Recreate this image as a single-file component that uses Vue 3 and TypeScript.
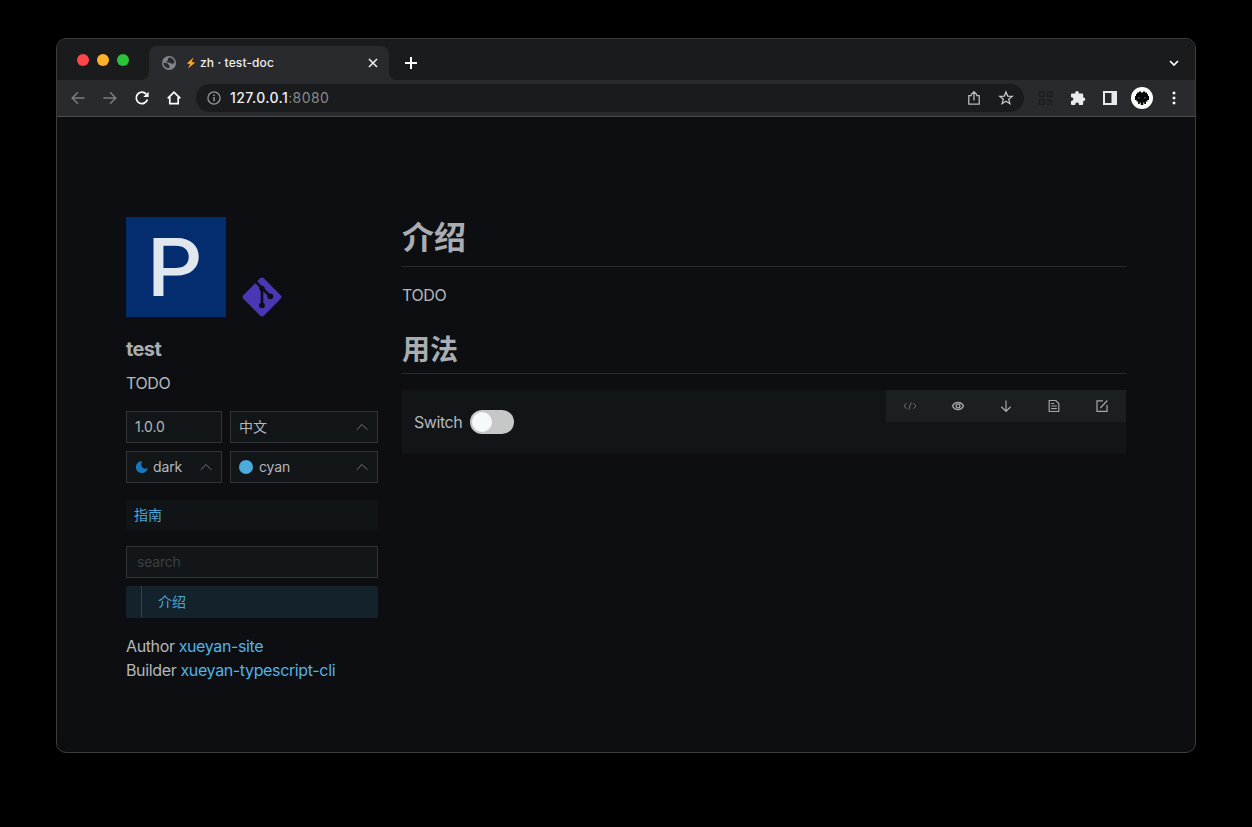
<script setup lang="ts">
import { ref } from 'vue'

interface NavLink {
  label: string
  name: string
  cls: string
}

const enabled = ref(false)
const query = ref('')
const lights: string[] = ['red', 'amber', 'green']
const credits: NavLink[] = [
  { label: 'Author', name: 'xueyan-site', cls: 'author' },
  { label: 'Builder', name: 'xueyan-typescript-cli', cls: 'builder' },
]
</script>

<template>
  <div class="desktop">
    <div class="window">
      <header class="tabs">
        <div class="lights"><i v-for="c in lights" :key="c" :class="c"></i></div>
        <div class="tab">
          <svg class="globe" width="14" height="14" viewBox="0 0 14 14">
            <circle cx="7" cy="7" r="7" fill="#81858b" />
            <path d="M7.300 1.400c-1.300.7-1.800 1.500-1.300 2.300.4.800-.5 1.400-1.900 1.500.2 1 1.200 1.300 2.600 1.300 1.500.1 1.900.9 2.900 1.200 1.200.3 2.100-.1 3-.9C12.400 3.800 10.200 1.400 7.300 1.400zM1.500 6.600c1.600.3 3 .4 4.100.9.900.5.500 1.300 1.500 1.700.8.300.6 1.700 0 3C3.800 12.400 1.400 9.800 1.500 6.600z" fill="#292a2e" />
          </svg>
          <svg class="bolt" width="10" height="12" viewBox="0 0 10 12"><path d="M7.500.5.800 6.500l3.300.4L2 11.500l7.200-6-3.500-.4z" fill="#f9a72b" /></svg>
          <span class="tab-title">zh · test-doc</span>
          <svg class="close" width="10" height="10" viewBox="0 0 10 10"><path d="M1 1l8 8M9 1L1 9" stroke="#e8eaed" stroke-width="1.700" /></svg>
        </div>
        <svg class="plus" width="12" height="12" viewBox="0 0 12 12"><path d="M6 0v12M0 6h12" stroke="#fff" stroke-width="2" /></svg>
        <svg class="chev" width="10" height="7" viewBox="0 0 10 7"><path d="M1 1l4 4 4-4" fill="none" stroke="#fff" stroke-width="1.700" /></svg>
      </header>

      <div class="toolbar">
        <svg width="16" height="16" viewBox="0 0 16 16"><path d="M14.500 8H2.500M8 2.200L2.200 8 8 13.800" fill="none" stroke="#7b7d81" stroke-width="1.500" /></svg>
        <svg width="16" height="16" viewBox="0 0 16 16"><path d="M1.500 8h12M8 2.200L13.800 8 8 13.800" fill="none" stroke="#7b7d81" stroke-width="1.500" /></svg>
        <svg width="16" height="16" viewBox="0 0 16 16"><path d="M13.400 9.500A5.700 5.700 0 1 1 12.200 4.100" fill="none" stroke="#fff" stroke-width="1.700" /><path d="M14.600 1.700v5.300H9.300z" fill="#fff" /></svg>
        <svg width="16" height="16" viewBox="0 0 16 16"><path d="M1.700 8.300L8 2.200l6.300 6.100M3.800 7v6.700h8.400V7" fill="none" stroke="#fff" stroke-width="1.700" /></svg>
        <div class="omnibox">
          <svg width="14" height="14" viewBox="0 0 14 14"><circle cx="7" cy="7" r="6.100" fill="none" stroke="#94969a" stroke-width="1.300" /><path d="M7 6v4.300M7 3.500v1.500" stroke="#94969a" stroke-width="1.500" /></svg>
          <span class="url"><b>127.0.0.1</b>:8080</span>
          <svg class="share" width="16" height="16" viewBox="0 0 16 16"><path d="M5.800 5.700H2.800v8.500h10.400V5.700h-3M8 10.500V1.800M5 4.700l3-3 3 3" fill="none" stroke="#b9bbbf" stroke-width="1.300" /></svg>
          <svg width="16" height="16" viewBox="0 0 16 16"><path d="M8 1.900l1.700 4.200 4.500.3-3.500 2.900 1.200 4.400L8 11.300l-3.900 2.400 1.200-4.400-3.500-2.900 4.500-.3z" fill="none" stroke="#c6c8cb" stroke-width="1.300" /></svg>
        </div>
        <svg width="16" height="16" viewBox="0 0 16 16" fill="none" stroke="#1c1d20" stroke-width="1.100"><path d="M1.600 1.600h4.800v4.800H1.600zM9.600 1.600h4.800v4.800H9.600zM1.600 9.600h4.800v4.800H1.600zM9 9.600h2v2H9M12.500 9v3h2.500M9 14.400h3M13 14.400h2M3.500 4h1M11.500 4h1M3.500 12h1" /></svg>
        <svg width="16" height="16" viewBox="0 0 16 16"><path d="M2 3.500h3.200v-.7a1.800 1.800 0 0 1 3.600 0v.7h3.400a1 1 0 0 1 1 1v3h.4a1.700 1.700 0 0 1 0 3.400h-.4v3.200a1 1 0 0 1-1 1H9v-.6a1.900 1.900 0 0 0-3.800 0v.6H2a1 1 0 0 1-1-1v-3.200h.6a1.800 1.800 0 0 0 0-3.600H1V4.500a1 1 0 0 1 1-1z" fill="#e9eaed" /></svg>
        <svg width="16" height="16" viewBox="0 0 16 16"><path d="M1 1h14v14H1zm2 2v10h6.500V3z" fill="#e9eaed" fill-rule="evenodd" /></svg>
        <svg class="avatar" width="22" height="22" viewBox="0 0 22 22"><circle cx="11" cy="11" r="11" fill="#fff" /><path d="M8 4.500h2v1h2v-1h2v1h2V7h1v2h1v4h-1.500v1.500H15V17h-1.700v-1.500h-1V18H9.700v-2.500h-1V17H7v-2.500H5.500V13H4V9h1V7h1V5.500h2z" fill="#050608" /><path d="M7.200 10h1.500v1.500H7.200zM13.300 10h1.500v1.500h-1.500z" fill="#555" /></svg>
        <svg width="16" height="16" viewBox="0 0 16 16" fill="#fff"><path d="M6.700 1.800h2.600v2.500H6.700zM6.700 6.800h2.600v2.500H6.700zM6.700 11.700h2.600v2.500H6.700z" /></svg>
      </div>

      <div class="page">
        <aside>
          <div class="brand">
            <div class="logo"><span>P</span></div>
            <svg width="40" height="40" viewBox="0 0 40 40">
              <rect x="5.500" y="5.500" width="29" height="29" rx="2.900" transform="rotate(45 20 20)" fill="#4937b5" />
              <g stroke="#0d0e12" stroke-width="2.600" fill="none"><path d="M13 4L20 11l8.500 8.500M20 11v17" /></g>
              <g fill="#0d0e12"><circle cx="20" cy="11.500" r="2.700" /><circle cx="28.300" cy="19.300" r="2.900" /><circle cx="20" cy="28.300" r="2.900" /></g>
            </svg>
          </div>
          <h3>test</h3>
          <p class="desc">TODO</p>
          <div class="options">
            <div class="field"><span class="version">1.0.0</span></div>
            <div class="field"><span>中文</span><svg class="up" width="12" height="8" viewBox="0 0 12 8"><path d="M.7 6.800L6 1.500l5.300 5.300" /></svg></div>
            <div class="field">
              <svg class="moon" width="12" height="12" viewBox="0 0 12 12"><path d="M5.300.3a5.900 5.900 0 1 0 6.400 6.200c-1.200 1.400-3.200 1.600-4.500.6C5 5.500 4.600 2.700 6.300.6z" fill="#1677bc" /></svg>
              <span class="dark">dark</span><svg class="up" width="12" height="8" viewBox="0 0 12 8"><path d="M.7 6.800L6 1.500l5.300 5.300" /></svg>
            </div>
            <div class="field">
              <i class="swatch"></i><span class="cyan">cyan</span><svg class="up" width="12" height="8" viewBox="0 0 12 8"><path d="M.7 6.800L6 1.500l5.300 5.300" /></svg>
            </div>
          </div>
          <a class="guide">指南</a>
          <input v-model="query" class="search" placeholder="search" />
          <nav class="current"><a>介绍</a></nav>
          <div v-for="c in credits" :key="c.name" class="credit" :class="c.cls"><span>{{ c.label }}</span> <a>{{ c.name }}</a></div>
        </aside>

        <main>
          <h1>介绍</h1>
          <p class="intro">TODO</p>
          <h2>用法</h2>
          <section class="demo">
            <div class="sample">
              <span>Switch</span>
              <button class="switch" :class="{ on: enabled }" aria-label="Switch" @click="enabled = !enabled"><i></i></button>
            </div>
            <div class="actions">
              <svg class="dim" width="14" height="14" viewBox="0 0 14 14"><path d="M3.600 4L1.200 7l2.400 3M10.400 4l2.400 3-2.400 3M8.200 3.300L5.800 10.700" /></svg>
              <svg class="eye" width="14" height="14" viewBox="0 0 14 14"><path d="M1.500 7C3.800 2.300 10.200 2.300 12.500 7 10.200 11.700 3.800 11.700 1.500 7z" /><circle cx="7" cy="7" r="1.900" /></svg>
              <svg width="14" height="14" viewBox="0 0 14 14"><path d="M7 1.500v10.700M2.300 7.700L7 12.300l4.700-4.600" /></svg>
              <svg width="14" height="14" viewBox="0 0 14 14"><path d="M2.200 1.500h6.600l3 3v8H2.200zM4.200 4.500h3M4.200 7h5.600M4.200 9.700h5.600" /></svg>
              <svg width="14" height="14" viewBox="0 0 14 14"><path d="M8 1.800H2v10.500h10V6M5.300 9l7-7.500" /></svg>
            </div>
          </section>
        </main>
      </div>
    </div>
  </div>
</template>

<style>
body { margin: 0; background: #000; }
</style>

<style scoped>
* { box-sizing: border-box; }
svg { flex: none; display: block; }
.desktop { height: 827px; padding: 38px 56px; background: #000; font-family: Inter, "Noto Sans CJK SC", sans-serif; color: #b5b8bb; }
.window { width: 1140px; height: 715px; border: 1px solid #3b3d3f; border-radius: 10px; overflow: hidden; background: #0c0e12; }
.tabs { height: 41px; display: flex; align-items: flex-end; background: #191b1c; }
.lights { display: flex; gap: 8px; padding: 0 19px 14px 20px; }
.lights i { width: 12px; height: 12px; border-radius: 50%; }
.red { background: #fc4649; }
.amber { background: #fdb22a; }
.green { background: #2bc23a; }
.tab { position: relative; width: 240px; height: 34px; margin-left: 1px; padding: 0 11px 0 13px; display: flex; align-items: center; background: #292a2e; border-radius: 8px 8px 0 0; }
.tab::before, .tab::after { content: ""; position: absolute; bottom: 0; width: 7px; height: 7px; }
.tab::before { left: -7px; background: radial-gradient(circle at 0 0, transparent 6.5px, #292a2e 7px); }
.tab::after { right: -7px; background: radial-gradient(circle at 100% 0, transparent 6.5px, #292a2e 7px); }
.bolt { margin-left: 10px; }
.tab-title { margin-left: 4px; padding-bottom: 1px; font-size: 12px; font-weight: 500; color: #eff0f1; letter-spacing: 0.12px; white-space: nowrap; }
.close { margin-left: auto; }
.plus { margin: 0 0 11px 16px; }
.chev { margin: 0 16px 13px auto; }
.toolbar { height: 37px; display: flex; align-items: center; gap: 16px; padding: 0 13px; background: #292a2e; border-bottom: 1px solid #4b4d50; }
.omnibox { width: 828px; height: 28px; margin-left: -2px; padding: 0 10px 0 11px; border-radius: 14px; background: #191b1c; display: flex; align-items: center; gap: 16px; }
.toolbar > .omnibox + svg { margin-left: -2px; }
.url { margin-left: -7px; padding-bottom: 1px; font-size: 14px; color: #888a8e; letter-spacing: 0.4px; }
.url b { font-weight: 500; color: #eff0f2; }
.share { margin-left: auto; }
.avatar { margin: 0 -3px; }
.page { display: flex; gap: 24px; padding: 100px 69px 0; }
aside { width: 252px; }
.brand { display: flex; align-items: flex-end; gap: 16px; }
.logo { width: 100px; height: 100px; background: #042d70; color: #e1e7ef; font-size: 80px; font-weight: 500; line-height: 99px; text-align: center; }
.logo span { display: inline-block; transform: translateX(-1px) scaleX(1.1); }
h3 { margin: 16px 0 0; font-size: 20px; line-height: 32px; font-weight: 700; color: #abaeb1; letter-spacing: -0.6px; }
.desc { margin: 6px 0 16px; font-size: 16px; line-height: 24px; letter-spacing: -0.4px; }
.options { display: grid; grid-template-columns: 96px 148px; gap: 8px; }
.field { height: 32px; padding: 0 9px 0 8px; border: 1px solid #303437; background: #121619; display: flex; align-items: center; font-size: 14px; }
.field span { padding-bottom: 2px; }
.version, .dark, .cyan { letter-spacing: -0.15px; }
.up { margin-left: auto; fill: none; stroke: #74787a; stroke-width: 1; }
.moon { margin: 0 5px 0 1px; }
.swatch { width: 14px; height: 14px; border-radius: 50%; background: #4aabdc; margin-right: 6px; }
.guide { display: block; height: 30px; margin-top: 17px; padding-left: 8px; font-size: 14px; line-height: 29px; background: #101417; color: #4da6d2; }
.search { display: block; width: 252px; height: 32px; margin: 16px 0 8px; padding: 0 10px 2px; border: 1px solid #303437; border-radius: 0; outline: 0; background: #121619; color: inherit; font: 14px Inter, sans-serif; letter-spacing: -0.2px; }
.search::placeholder { color: #3b4043; opacity: 1; }
.current { height: 32px; padding-left: 15px; background: #14222c; border-radius: 2px; }
.current a { display: block; height: 32px; border-left: 1px solid #354349; padding-left: 16px; font-size: 14px; line-height: 32px; color: #4da6d2; }
.credit { font-size: 16px; line-height: 24px; white-space: nowrap; }
.credit a { color: #55b3e2; }
.author { margin-top: 16px; letter-spacing: -0.38px; }
.builder { letter-spacing: -0.36px; }
main { width: 724px; }
h1, h2 { margin: 0; font-weight: 700; color: #a9adb1; border-bottom: 1px solid #292c2f; }
h1 { height: 50px; font-size: 32px; line-height: 42px; }
h2 { height: 42px; font-size: 28px; line-height: 36px; }
.intro { margin: 16px 0 25px; font-size: 16px; line-height: 24px; letter-spacing: -0.4px; }
.demo { display: flex; justify-content: space-between; height: 64px; margin-top: 16px; background: #111518; border-radius: 2px; }
.sample { display: flex; align-items: center; gap: 8px; padding-left: 12px; font-size: 16px; letter-spacing: -0.45px; }
.switch { width: 44px; height: 24px; padding: 2px; border: 0; border-radius: 12px; background: #c6c8c8; }
.switch i { display: block; width: 20px; height: 20px; border-radius: 50%; background: #f6f9fc; }
.switch.on i { margin-left: 20px; }
.actions { width: 240px; height: 32px; display: flex; align-items: center; justify-content: space-around; background: #1b1f22; }
.actions svg { fill: none; stroke: #a5a8aa; stroke-width: 1.200; }
.actions .eye { stroke-width: 1.400; }
.actions .dim { stroke: #6b6e70; stroke-width: 1; }
</style>
